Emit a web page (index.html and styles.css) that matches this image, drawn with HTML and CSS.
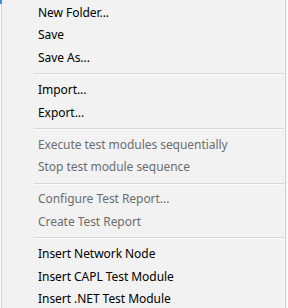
FILE: index.html
```html
<!DOCTYPE html>
<html>
<head>
<meta charset="utf-8">
<link rel="stylesheet" href="styles.css">
</head>
<body>
<div class="frame">
  <div class="menu">
    <div class="item">New Folder...</div>
    <div class="item">Save</div>
    <div class="item">Save As...</div>
    <div class="sep"></div>
    <div class="item">Import...</div>
    <div class="item">Export...</div>
    <div class="sep"></div>
    <div class="item disabled">Execute test modules sequentially</div>
    <div class="item disabled">Stop test module sequence</div>
    <div class="sep"></div>
    <div class="item disabled">Configure Test Report...</div>
    <div class="item disabled">Create Test Report</div>
    <div class="sep"></div>
    <div class="item">Insert Network Node</div>
    <div class="item">Insert CAPL Test Module</div>
    <div class="item">Insert .NET Test Module</div>
  </div>
</div>
</body>
</html>
```
FILE: styles.css
```css
html, body {
  margin: 0;
  padding: 0;
}
body {
  width: 288px;
  height: 308px;
  overflow: hidden;
  background: #f9f9f9;
  font-family: "Noto Sans", "Open Sans", sans-serif;
  font-size: 12px;
  letter-spacing: -0.05px;
}
.frame {
  position: relative;
  width: 286px;
  height: 308px;
  border-left: 1px solid #fafafa;
  box-sizing: border-box;
}
.frame::before {
  content: "";
  position: absolute;
  left: -1px;
  top: 0;
  width: 2px;
  height: 4px;
  background: #3d8ee0;
}
.menu {
  height: 308px;
  box-sizing: border-box;
  border-left: 1px solid #d4d4d4;
  border-right: 1px solid #d0d0d0;
  background: #f2f2f2;
  padding-top: 1.6px;
  display: flex;
  flex-direction: column;
}
.item {
  height: 22.8px;
  line-height: 22.8px;
  padding-left: 36px;
  color: #000;
  white-space: nowrap;
  flex: none;
}
.item.disabled {
  color: #6d6d6d;
}
.sep {
  flex: none;
  height: 9px;
  display: flex;
  align-items: center;
  padding-left: 32px;
  padding-right: 1px;
}
.sep::after {
  content: "";
  display: block;
  flex: 1;
  height: 1px;
  background: #d7d7d7;
  border-bottom: 1px solid #fbfbfb;
}
```
